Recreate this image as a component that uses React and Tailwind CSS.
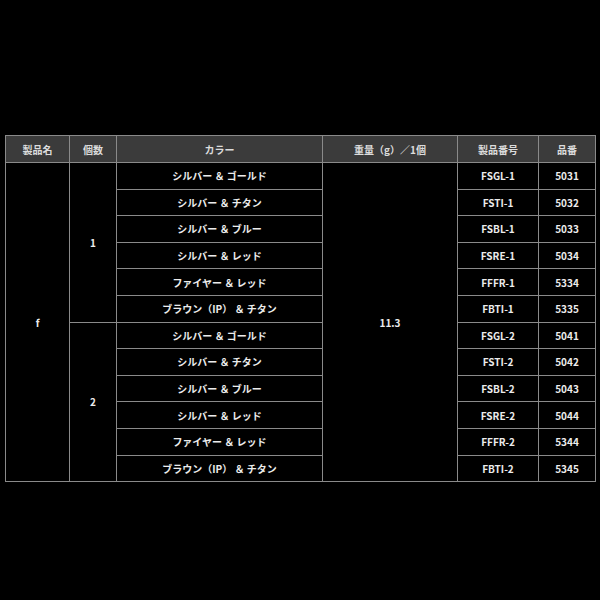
const rows = [
  ["シルバー ＆ ゴールド", "FSGL-1", "5031"],
  ["シルバー ＆ チタン", "FSTI-1", "5032"],
  ["シルバー ＆ ブルー", "FSBL-1", "5033"],
  ["シルバー ＆ レッド", "FSRE-1", "5034"],
  ["ファイヤー ＆ レッド", "FFFR-1", "5334"],
  ["ブラウン（IP） ＆ チタン", "FBTI-1", "5335"],
  ["シルバー ＆ ゴールド", "FSGL-2", "5041"],
  ["シルバー ＆ チタン", "FSTI-2", "5042"],
  ["シルバー ＆ ブルー", "FSBL-2", "5043"],
  ["シルバー ＆ レッド", "FSRE-2", "5044"],
  ["ファイヤー ＆ レッド", "FFFR-2", "5344"],
  ["ブラウン（IP） ＆ チタン", "FBTI-2", "5345"],
];

const cell = "border border-[#8a8a8a] text-center align-middle p-0";
const head = `${cell} bg-[#3b3b3b] text-[#dcdcdc] h-[27px]`;

export default function App() {
  return (
    <div
      className="w-[600px] h-[600px] bg-black pt-[135px] pl-[5px] text-[10px] font-bold text-[#ececec]"
      style={{ fontFamily: '"Noto Sans CJK JP", "Noto Sans", sans-serif' }}
    >
      <table className="border-collapse table-fixed w-[590px]">
        <colgroup>
          <col className="w-[64px]" />
          <col className="w-[47px]" />
          <col className="w-[206px]" />
          <col className="w-[135px]" />
          <col className="w-[81px]" />
          <col className="w-[57px]" />
        </colgroup>
        <thead>
          <tr>
            <th className={head}>製品名</th>
            <th className={head}>個数</th>
            <th className={head}>カラー</th>
            <th className={head}>重量（g）／1個</th>
            <th className={head}>製品番号</th>
            <th className={head}>品番</th>
          </tr>
        </thead>
        <tbody>
          {rows.map(([color, code, num], i) => (
            <tr key={code} className="h-[26.6px]">
              {i === 0 && (
                <td rowSpan={12} className={cell}>
                  f
                </td>
              )}
              {i % 6 === 0 && (
                <td rowSpan={6} className={cell}>
                  {i === 0 ? 1 : 2}
                </td>
              )}
              <td className={cell}>{color}</td>
              {i === 0 && (
                <td rowSpan={12} className={cell}>
                  11.3
                </td>
              )}
              <td className={cell}>{code}</td>
              <td className={cell}>{num}</td>
            </tr>
          ))}
        </tbody>
      </table>
    </div>
  );
}
